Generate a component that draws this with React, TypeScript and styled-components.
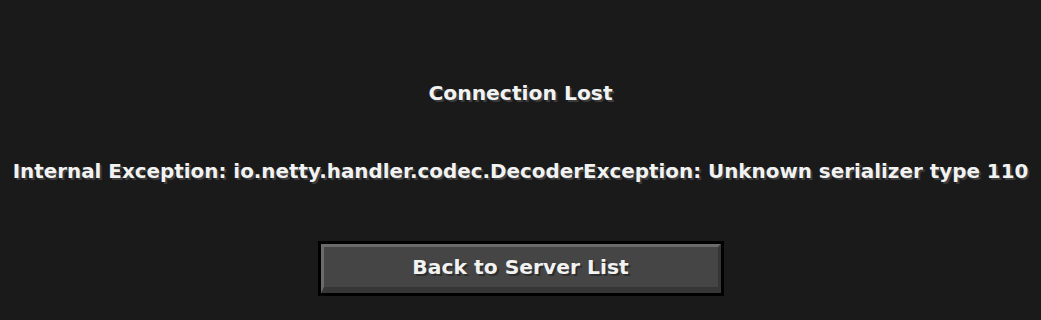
import React from "react";
import styled, { createGlobalStyle } from "styled-components";

const Global = createGlobalStyle`
  html, body { margin: 0; padding: 0; background: #1a1a1a; }
  #root { height: 320px; }
`;

const Screen = styled.div`
  height: 320px;
  background: #1a1a1a;
  display: flex;
  flex-direction: column;
  align-items: center;
  font-family: "DejaVu Sans", "Liberation Sans", sans-serif;
  font-weight: 700;
  color: #f2f2f2;
`;

const Label = styled.div<{ $size: number; $top: number }>`
  margin-top: ${(p) => p.$top}px;
  font-size: ${(p) => p.$size}px;
  line-height: 24px;
  white-space: nowrap;
  text-shadow: 2px 2px 0 #3c3c3c;
`;

const Button = styled.button`
  margin-top: 57px;
  width: 406px;
  height: 55px;
  padding: 0;
  border: 3px solid #000;
  background: #000;
  display: flex;
  cursor: pointer;
`;

const Face = styled.span`
  flex: 1;
  display: flex;
  align-items: center;
  justify-content: center;
  background: #454545;
  border-top: 3px solid #6b6b6b;
  border-left: 3px solid #6b6b6b;
  border-right: 3px solid #363636;
  border-bottom: 6px solid #363636;
  font-family: "DejaVu Sans", "Liberation Sans", sans-serif;
  font-weight: 700;
  font-size: 20.3px;
  color: #f2f2f2;
  text-shadow: 2px 2px 0 #2e2e2e;
`;

export default function App() {
  return (
    <>
      <Global />
      <Screen>
        <Label $size={20.3} $top={81}>Connection Lost</Label>
        <Label $size={19.9} $top={55}>
          Internal Exception: io.netty.handler.codec.DecoderException: Unknown serializer type 110
        </Label>
        <Button>
          <Face>Back to Server List</Face>
        </Button>
      </Screen>
    </>
  );
}
